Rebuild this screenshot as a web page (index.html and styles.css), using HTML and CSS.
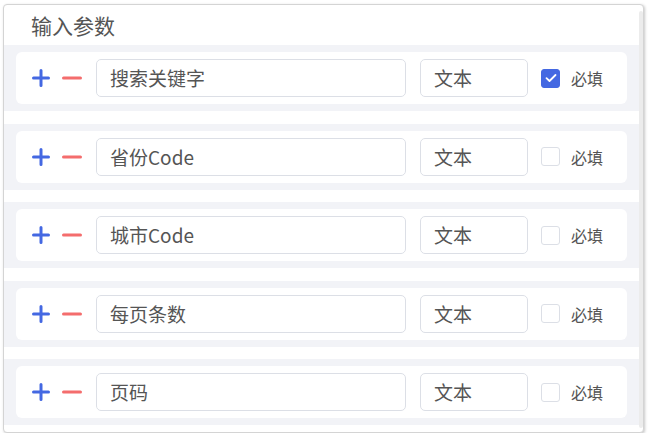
FILE: index.html
```html
<!DOCTYPE html>
<html>
<head>
    <link rel="stylesheet" href="styles.css">
</head>
<body>
    <div class="panel">
        <div class="panel-main">
            <!-- Title -->
            <div class="panel-title">输入参数</div>

            <!-- Parameter rows -->
            <div class="param-band">
                <div class="param-card">
                    <svg class="icon-add" width="18" height="18" viewBox="0 0 18 18"><path d="M9 1.5v15M1.5 9h15" stroke="#4468e2" stroke-width="3" stroke-linecap="round"/></svg>
                    <svg class="icon-remove" width="20" height="18" viewBox="0 0 20 18"><path d="M1.5 9h17" stroke="#f46d6d" stroke-width="3" stroke-linecap="round"/></svg>
                    <div class="field field-name">搜索关键字</div>
                    <div class="field field-type">文本</div>
                    <span class="check checked"><svg width="12" height="10" viewBox="0 0 12 10"><path d="M1.5 5.2l3 2.8 6-6" stroke="#fff" stroke-width="1.8" fill="none" stroke-linecap="round" stroke-linejoin="round"/></svg></span>
                    <span class="check-label">必填</span>
                </div>
            </div>

            <div class="param-band">
                <div class="param-card">
                    <svg class="icon-add" width="18" height="18" viewBox="0 0 18 18"><path d="M9 1.5v15M1.5 9h15" stroke="#4468e2" stroke-width="3" stroke-linecap="round"/></svg>
                    <svg class="icon-remove" width="20" height="18" viewBox="0 0 20 18"><path d="M1.5 9h17" stroke="#f46d6d" stroke-width="3" stroke-linecap="round"/></svg>
                    <div class="field field-name">省份Code</div>
                    <div class="field field-type">文本</div>
                    <span class="check"></span>
                    <span class="check-label">必填</span>
                </div>
            </div>

            <div class="param-band">
                <div class="param-card">
                    <svg class="icon-add" width="18" height="18" viewBox="0 0 18 18"><path d="M9 1.5v15M1.5 9h15" stroke="#4468e2" stroke-width="3" stroke-linecap="round"/></svg>
                    <svg class="icon-remove" width="20" height="18" viewBox="0 0 20 18"><path d="M1.5 9h17" stroke="#f46d6d" stroke-width="3" stroke-linecap="round"/></svg>
                    <div class="field field-name">城市Code</div>
                    <div class="field field-type">文本</div>
                    <span class="check"></span>
                    <span class="check-label">必填</span>
                </div>
            </div>

            <div class="param-band">
                <div class="param-card">
                    <svg class="icon-add" width="18" height="18" viewBox="0 0 18 18"><path d="M9 1.5v15M1.5 9h15" stroke="#4468e2" stroke-width="3" stroke-linecap="round"/></svg>
                    <svg class="icon-remove" width="20" height="18" viewBox="0 0 20 18"><path d="M1.5 9h17" stroke="#f46d6d" stroke-width="3" stroke-linecap="round"/></svg>
                    <div class="field field-name">每页条数</div>
                    <div class="field field-type">文本</div>
                    <span class="check"></span>
                    <span class="check-label">必填</span>
                </div>
            </div>

            <div class="param-band">
                <div class="param-card">
                    <svg class="icon-add" width="18" height="18" viewBox="0 0 18 18"><path d="M9 1.5v15M1.5 9h15" stroke="#4468e2" stroke-width="3" stroke-linecap="round"/></svg>
                    <svg class="icon-remove" width="20" height="18" viewBox="0 0 20 18"><path d="M1.5 9h17" stroke="#f46d6d" stroke-width="3" stroke-linecap="round"/></svg>
                    <div class="field field-name">页码</div>
                    <div class="field field-type">文本</div>
                    <span class="check"></span>
                    <span class="check-label">必填</span>
                </div>
            </div>
        </div>

        <!-- Scroll track -->
        <div class="panel-scroll"></div>
    </div>
</body>
</html>
```

FILE: styles.css
```css
/* Global */
body {
    margin: 0;
    background: #fff;
    font-family: "Noto Sans CJK SC", "Noto Sans", sans-serif;
    color: #555;
}

/* Outer panel */
.panel {
    display: flex;
    margin: 4px 7px 0 3px;
    height: 427px;
    border: 1px solid #d4d4d4;
    border-radius: 4px;
    box-shadow: 1px 1px 3px rgba(0, 0, 0, 0.22);
    background: #fff;
    overflow: hidden;
}

.panel-main {
    flex: 1;
}

.panel-scroll {
    width: 4px;
    margin: 6px 0 4px;
    background: #ececec;
    border-radius: 2px;
}

.panel-title {
    height: 40px;
    line-height: 40px;
    padding-left: 27px;
    font-size: 21px;
    color: #555;
}

/* Parameter rows */
.param-band {
    background: #f2f3f7;
    padding: 7px 12px;
    margin-bottom: 12.5px;
}

.param-card {
    display: flex;
    align-items: center;
    height: 52px;
    padding-left: 16px;
    background: #fff;
    border-radius: 6px;
}

.icon-add {
    display: block;
}

.icon-remove {
    display: block;
    margin-left: 12px;
}

.field {
    box-sizing: border-box;
    height: 38px;
    line-height: 36px;
    padding-left: 13px;
    border: 1px solid #dcdfe6;
    border-radius: 5px;
    font-size: 19px;
    color: #555;
}

.field-name {
    width: 310px;
    margin-left: 14px;
}

.field-type {
    width: 108px;
    margin-left: 14px;
}

/* Checkbox */
.check {
    box-sizing: border-box;
    display: flex;
    align-items: center;
    justify-content: center;
    width: 19px;
    height: 19px;
    margin-left: 13px;
    border: 1px solid #dcdfe6;
    border-radius: 3px;
    background: #fff;
}

.check.checked {
    background: #4468e2;
    border-color: #4468e2;
}

.check-label {
    margin-left: 11px;
    font-size: 16px;
    color: #555;
}
```
